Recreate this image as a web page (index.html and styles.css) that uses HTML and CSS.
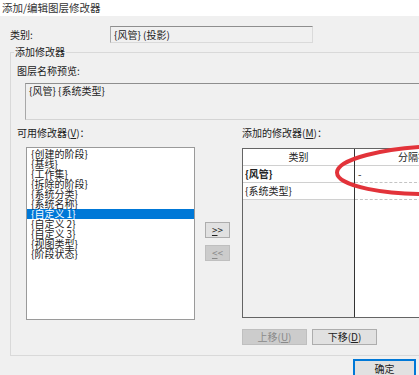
FILE: index.html
```html
<!DOCTYPE html>
<html lang="zh-CN">
<head>
  <meta charset="UTF-8">
  <meta name="viewport" content="width=device-width, initial-scale=1.0">
  <title>添加/编辑图层修改器</title>
  <link rel="stylesheet" href="styles.css">
</head>
<body>

  <div class="titlebar">添加/编辑图层修改器</div>

  <div class="field-row">
    <span class="field-label">类别:</span>
    <div class="field-box">{风管} (投影)</div>
  </div>

  <!-- 添加修改器 分组 -->
  <div class="group">
    <div class="group-title">添加修改器</div>

    <div class="preview-label">图层名称预览:</div>
    <div class="preview-box">{风管} {系统类型}</div>

    <div class="lists">
      <div class="avail">
        <div class="col-label">可用修改器(<u>V</u>)：</div>
        <ul class="listbox">
          <li>{创建的阶段}</li>
          <li>{基线}</li>
          <li>{工作集}</li>
          <li>{拆除的阶段}</li>
          <li>{系统分类}</li>
          <li>{系统名称}</li>
          <li class="selected">{自定义 1}</li>
          <li>{自定义 2}</li>
          <li>{自定义 3}</li>
          <li>{视图类型}</li>
          <li>{阶段状态}</li>
        </ul>
      </div>

      <div class="arrows">
        <button class="btn small"><u>&gt;</u>&gt;</button>
        <button class="btn small disabled"><u>&lt;</u>&lt;</button>
      </div>

      <div class="added">
        <div class="col-label">添加的修改器(<u>M</u>)：</div>
        <div class="tbl">
          <div class="tcol left">
            <div class="thead">类别</div>
            <div class="cell bold">{风管}</div>
            <div class="cell">{系统类型}</div>
            <div class="filler"></div>
          </div>
          <div class="tcol right">
            <div class="thead">分隔符</div>
            <div class="cell">-</div>
            <div class="cell"></div>
            <div class="filler"></div>
          </div>
        </div>
        <div class="move-row">
          <button class="btn move disabled">上移(<u>U</u>)</button>
          <button class="btn move">下移(<u>D</u>)</button>
        </div>
      </div>
    </div>
  </div>

  <div class="footer">
    <button class="btn ok">确定</button>
  </div>

  <!-- 红色圈注 -->
  <svg class="mark" width="89" height="60" viewBox="0 0 89 60">
    <ellipse cx="110" cy="30" rx="103" ry="24" fill="none" stroke="#e2333a" stroke-width="4" transform="rotate(-1.5 110 30)"/>
  </svg>

</body>
</html>
```

FILE: styles.css
```css
body {
  margin: 0;
  width: 419px;
  height: 375px;
  overflow: hidden;
  position: relative;
  background-color: #f0f0f0;
  color: #222;
  font-family: "Noto Sans CJK SC", "Microsoft YaHei", sans-serif;
  font-size: 10px;
}

u {
  text-underline-offset: 1px;
}

.titlebar {
  height: 16px;
  line-height: 16px;
  padding-left: 2px;
  background-color: #fff;
  font-size: 10.5px;
  color: #333;
}

.field-row {
  display: flex;
  align-items: center;
  margin: 10px 0 0 10px;
  height: 17px;
}

.field-label {
  width: 100px;
}

.field-box {
  box-sizing: border-box;
  width: 203px;
  height: 17px;
  line-height: 15px;
  padding-left: 3px;
  border: 1px solid #dadada;
  border-top-color: #8e8e8e;
  border-left-color: #aaa;
}

/* 分组框 */
.group {
  margin: 9px 0 0 10px;
  width: 520px;
  border: 1px solid #d9d9d9;
  padding-bottom: 10px;
}

.group-title {
  width: fit-content;
  margin: -7px 0 0 3px;
  padding: 0 1px;
  line-height: 12px;
  background-color: #f0f0f0;
}

.preview-label {
  margin: 7px 0 0 6px;
  line-height: 12px;
}

.preview-box {
  box-sizing: border-box;
  margin: 6px 0 0 14px;
  height: 37px;
  padding: 1px 3px;
  line-height: 12px;
  border: 1px solid #d4d4d4;
  border-top-color: #8e8e8e;
  border-left-color: #a8a8a8;
}

.lists {
  display: flex;
  margin: 7px 0 0 6px;
}

.lists > div {
  flex-shrink: 0;
}

.col-label {
  line-height: 12px;
  white-space: nowrap;
}

.avail {
  width: 178px;
}

.listbox {
  box-sizing: border-box;
  list-style: none;
  margin: 8px 0 0 9px;
  padding: 1px 0 0 0;
  width: 169px;
  height: 173px;
  background-color: #fff;
  border: 1px solid #9a9a9a;
}

.listbox li {
  height: 10px;
  line-height: 10px;
  padding-left: 4px;
  white-space: nowrap;
}

.listbox li.selected {
  background-color: #0078d7;
  color: #fff;
}

.arrows {
  display: flex;
  flex-direction: column;
  gap: 7px;
  margin-left: 10px;
  padding-top: 95px;
}

.btn {
  box-sizing: border-box;
  margin: 0;
  padding: 0;
  font-family: inherit;
  font-size: 10px;
  line-height: 14px;
  color: #222;
  background-color: #e1e1e1;
  border: 1px solid #adadad;
}

.btn.small {
  width: 25px;
  height: 16px;
}

.btn.disabled {
  background-color: #cccccc;
  border-color: #bfbfbf;
  color: #8a8a8a;
}

.added {
  margin-left: 12px;
}

/* 已添加修改器表格 */
.tbl {
  display: flex;
  box-sizing: border-box;
  margin-top: 9px;
  height: 170px;
  border-left: 1px solid #646464;
  border-top: 1px solid #646464;
  border-bottom: 1px solid #646464;
}

.tcol {
  display: flex;
  flex-direction: column;
  flex-shrink: 0;
}

.tcol.left {
  width: 111px;
  border-right: 1px solid #333;
}

.tcol.right {
  width: 116px;
}

.thead {
  box-sizing: border-box;
  height: 17px;
  line-height: 16px;
  text-align: center;
  background-color: #fff;
  border-bottom: 1px solid #d0d0d0;
}

.cell {
  box-sizing: border-box;
  height: 17px;
  line-height: 16px;
  padding-left: 2px;
  background-color: #fff;
  border-bottom: 1px solid #d0d0d0;
}

.right .cell {
  padding-left: 3px;
  border-bottom: 1px dashed #c4c4c4;
}

.cell.bold {
  font-weight: bold;
}

.filler {
  flex: 1;
  background-color: #f0f0f0;
}

.right .filler {
  background-color: #fff;
}

.move-row {
  display: flex;
  gap: 5px;
  margin-top: 11px;
}

.btn.move {
  width: 65px;
  height: 16px;
}

.footer {
  padding: 3px 0 0 353px;
}

.btn.ok {
  width: 63px;
  height: 20px;
  line-height: 15px;
  padding-bottom: 2px;
  border: 1px solid #0078d7;
  box-shadow: inset 0 0 0 1px #0078d7;
  vertical-align: top;
}

.mark {
  position: absolute;
  left: 330px;
  top: 140px;
}
```
